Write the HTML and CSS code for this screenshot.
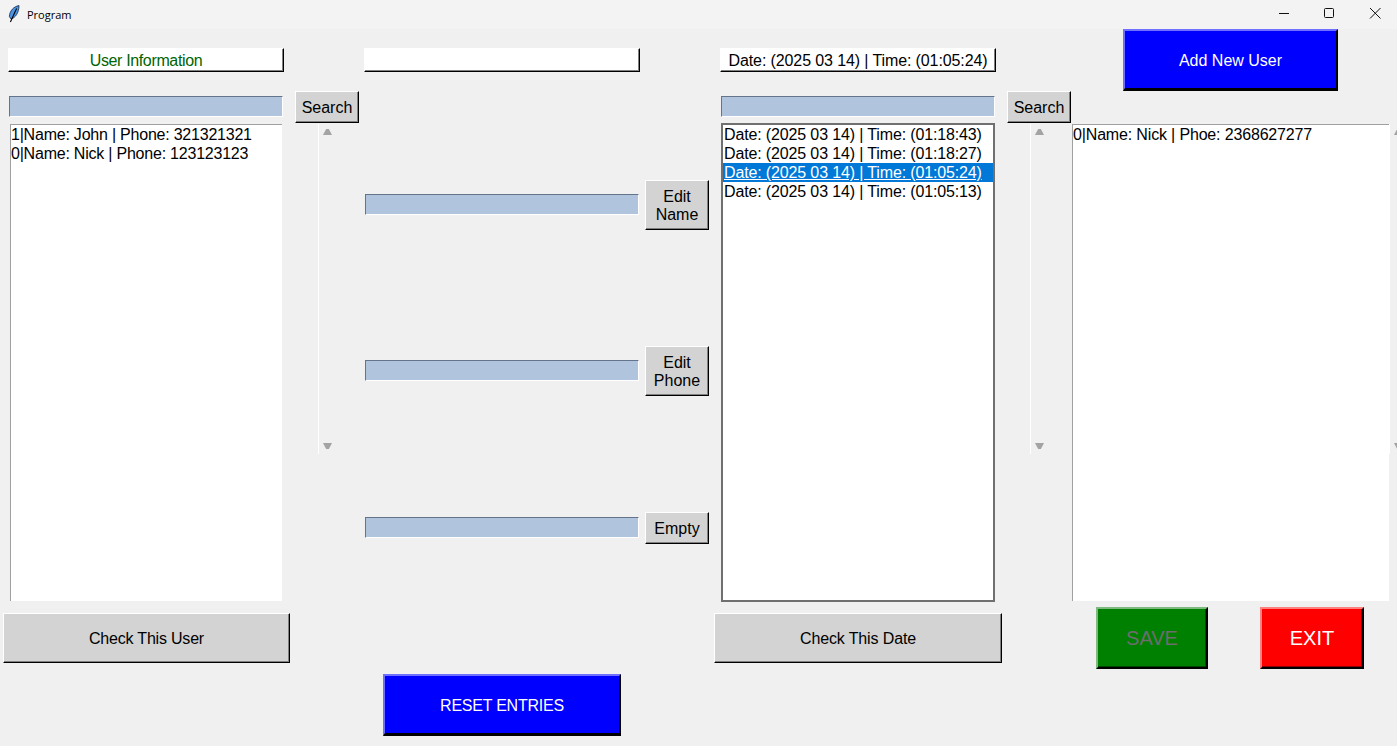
FILE: index.html
```html
<!DOCTYPE html>
<html lang="en">
<head>
    <meta charset="UTF-8">
    <meta name="viewport" content="width=device-width, initial-scale=1.0">
    <title>Program</title>
    <link rel="stylesheet" href="styles.css">
</head>
<body>

    <header class="titlebar">
        <svg class="app-icon" width="12" height="18" viewBox="0 0 12 18">
            <path d="M11 0.6C6 1.4 1.6 5.6 1.4 11.6L3 14C7.4 12.8 10.8 8 11 0.6Z" fill="#4a94e6" stroke="#1c3554" stroke-width="0.9"/>
            <path d="M8.6 3.6L2.4 17" stroke="#000" stroke-width="1.1" fill="none"/>
        </svg>
        <span class="app-name">Program</span>
        <div class="window-controls">
            <svg class="win-btn" width="46" height="29" viewBox="0 0 46 29"><path d="M19 13.5H29" stroke="#111" fill="none"/></svg>
            <svg class="win-btn" width="46" height="29" viewBox="0 0 46 29"><rect x="18.5" y="8.5" width="9" height="9" rx="1" stroke="#111" fill="none"/></svg>
            <svg class="win-btn" width="46" height="29" viewBox="0 0 46 29"><path d="M18 8L28.5 18.5M28.5 8L18 18.5" stroke="#111" fill="none"/></svg>
        </div>
    </header>

    <main class="app">

        <!-- users -->
        <section class="col col-users">
            <div class="heading heading-users">User Information</div>
            <div class="search-row">
                <input class="entry search-entry" type="text">
                <button class="btn btn-small search-btn" type="button">Search</button>
            </div>
            <div class="list-row">
                <ul class="listbox users-list">
                    <li>1|Name: John | Phone: 321321321</li>
                    <li>0|Name: Nick | Phone: 123123123</li>
                </ul>
                <div class="scrollbar users-scroll"><span class="arrow-up"></span><span class="arrow-down"></span></div>
            </div>
            <button class="btn check-user" type="button">Check This User</button>
        </section>

        <!-- edit fields -->
        <section class="col col-edit">
            <div class="heading"></div>
            <div class="edit-row first-edit">
                <input class="entry edit-entry" type="text">
                <button class="btn btn-small edit-btn" type="button">Edit<br>Name</button>
            </div>
            <div class="edit-row">
                <input class="entry edit-entry" type="text">
                <button class="btn btn-small edit-btn" type="button">Edit<br>Phone</button>
            </div>
            <div class="edit-row short-row">
                <input class="entry edit-entry" type="text">
                <button class="btn btn-small edit-btn" type="button">Empty</button>
            </div>
            <button class="btn btn-blue reset-btn" type="button">RESET ENTRIES</button>
        </section>

        <!-- dates -->
        <section class="col col-dates">
            <div class="heading heading-date">Date: (2025 03 14) | Time: (01:05:24)</div>
            <div class="search-row">
                <input class="entry search-entry" type="text">
                <button class="btn btn-small search-btn" type="button">Search</button>
            </div>
            <div class="list-row">
                <ul class="listbox dates-list">
                    <li>Date: (2025 03 14) | Time: (01:18:43)</li>
                    <li>Date: (2025 03 14) | Time: (01:18:27)</li>
                    <li class="selected"><span>Date: (2025 03 14) | Time: (01:05:24)</span></li>
                    <li>Date: (2025 03 14) | Time: (01:05:13)</li>
                </ul>
                <div class="scrollbar dates-scroll"><span class="arrow-up"></span><span class="arrow-down"></span></div>
            </div>
            <button class="btn check-date" type="button">Check This Date</button>
        </section>

        <!-- details -->
        <section class="col col-details">
            <button class="btn btn-blue add-btn" type="button">Add New User</button>
            <div class="list-row details-row">
                <ul class="listbox details-list">
                    <li>0|Name: Nick | Phoe: 2368627277</li>
                </ul>
                <div class="scrollbar details-scroll"><span class="arrow-up"></span><span class="arrow-down"></span></div>
            </div>
            <div class="action-row">
                <button class="btn btn-save" type="button">SAVE</button>
                <button class="btn btn-exit" type="button">EXIT</button>
            </div>
        </section>

    </main>

</body>
</html>
```

FILE: styles.css
```css
* {
    box-sizing: border-box;
}

html, body {
    height: 100%;
}

body {
    margin: 0;
    overflow: hidden;
    background-color: #f0f0f0;
    font-family: "Liberation Sans", Arial, sans-serif;
    font-size: 16px;
    color: #000;
}

/* window title bar */
.titlebar {
    display: flex;
    align-items: center;
    height: 29px;
    padding-left: 8px;
    background-color: #f3f3f3;
}

.app-icon {
    margin-top: -2px;
}

.app-name {
    margin-left: 7px;
    font-family: "Open Sans", sans-serif;
    font-size: 11px;
    color: #000;
}

.window-controls {
    display: flex;
    margin-left: auto;
    margin-right: -1px;
}

.win-btn {
    display: block;
}

/* main layout */
.app {
    display: flex;
    height: 717px;
    padding-left: 3px;
}

.col {
    display: flex;
    flex-direction: column;
    align-items: flex-start;
    flex-shrink: 0;
}

.col-users {
    width: 361px;
}

.col-edit {
    width: 350px;
}

.col-dates {
    width: 358px;
}

.col-details {
    width: 325px;
}

/* heading labels */
.heading {
    width: 276px;
    height: 24px;
    margin-top: 19px;
    border-style: solid;
    border-width: 1px;
    border-color: #fff #000 #000 #fff;
    background-color: #fff;
    box-shadow: inset -1px -1px 0 #808080;
    line-height: 23px;
    text-align: center;
    white-space: nowrap;
}

.heading-users {
    margin-left: 5px;
    color: #006400;
    letter-spacing: -0.36px;
}

.heading-date {
    margin-left: 6px;
    letter-spacing: -0.11px;
}

/* entries */
.entry {
    display: block;
    width: 274px;
    height: 21px;
    padding: 0;
    border-style: solid;
    border-width: 1px;
    border-color: #64748a #fff #fff #64748a;
    border-radius: 0;
    background-color: #b0c4de;
    outline: none;
}

.search-row {
    display: flex;
    align-items: flex-start;
    height: 32px;
    margin-top: 19px;
}

.search-entry {
    margin-top: 5px;
    margin-left: 6px;
}

.col-dates .search-entry {
    margin-left: 7px;
}

.search-btn {
    width: 64px;
    height: 32px;
    margin-left: 12px;
    padding-left: 1px;
}

/* buttons */
.btn {
    display: block;
    padding: 2px 0 0;
    border-style: solid;
    border-width: 1px;
    border-color: #fff #000 #000 #fff;
    border-radius: 0;
    background-color: #d3d3d3;
    box-shadow: inset -1px -1px 0 #808080;
    font-family: "Liberation Sans", Arial, sans-serif;
    font-size: 16px;
    line-height: 18px;
    color: #000;
    cursor: pointer;
}

.check-user {
    width: 287px;
    height: 50px;
    margin-top: 12px;
    letter-spacing: -0.2px;
}

.check-date {
    width: 288px;
    height: 50px;
    margin-top: 11px;
    letter-spacing: -0.13px;
}

.btn-blue {
    border-width: 2px 2px 3px 2px;
    border-color: #7070ff #000 #000 #7070ff;
    background-color: #00f;
    box-shadow: none;
    color: #fff;
}

.add-btn {
    width: 215px;
    height: 62px;
    margin-left: 51px;
}

.reset-btn {
    width: 238px;
    height: 62px;
    margin-top: 130px;
    margin-left: 19px;
    letter-spacing: -0.23px;
}

.btn-save,
.btn-exit {
    height: 62px;
    padding: 0;
    border-width: 2px;
    box-shadow: inset -1px -1px 0 rgba(0, 0, 0, 0.45);
    font-size: 20px;
}

.btn-save {
    width: 112px;
    margin-left: 24px;
    border-color: #80b980 #000 #000 #80b980;
    background-color: #008000;
    color: #6d6d6d;
}

.btn-exit {
    width: 104px;
    margin-left: 52px;
    border-color: #ff8080 #000 #000 #ff8080;
    background-color: #f00;
    color: #fff;
}

.action-row {
    display: flex;
    margin-top: 6px;
}

/* edit column */
.edit-row {
    display: flex;
    align-items: flex-start;
    margin-top: 116px;
}

.first-edit {
    margin-top: 108px;
}

.edit-entry {
    margin-top: 14px;
    margin-left: 1px;
}

.edit-btn {
    width: 64px;
    height: 50px;
    margin-left: 6px;
}

.short-row .edit-entry {
    margin-top: 5px;
}

.short-row .edit-btn {
    height: 32px;
}

/* listboxes */
.list-row {
    display: flex;
    align-items: flex-start;
    margin-top: 1px;
}

.listbox {
    margin: 0;
    padding: 0;
    border-style: solid;
    border-width: 1px 0 0 1px;
    border-color: #a0a0a0;
    background-color: #fff;
    list-style: none;
    flex-shrink: 0;
}

.listbox li {
    height: 19px;
    line-height: 19px;
    white-space: nowrap;
}

.users-list {
    width: 272px;
    height: 477px;
    margin-left: 7px;
    letter-spacing: -0.22px;
}

.dates-list {
    width: 274px;
    height: 479px;
    margin-left: 7px;
    border: 2px solid #707070;
    letter-spacing: -0.14px;
}

.dates-list li {
    padding-left: 1px;
}

.dates-list .selected {
    background-color: #0078d7;
    color: #fff;
}

.selected span {
    text-decoration: underline;
}

.details-list {
    width: 317px;
    height: 477px;
    letter-spacing: -0.16px;
}

.col-dates .list-row {
    margin-top: 0;
}

.details-row {
    margin-top: 33px;
}

/* scrollbars, only the line and the two arrows are visible */
.scrollbar {
    display: flex;
    flex-direction: column;
    justify-content: space-between;
    flex-shrink: 0;
    width: 18px;
    height: 330px;
    padding: 5px 0 5px 4px;
    border-left: 1px solid #fff;
}

.users-scroll {
    margin-left: 36px;
}

.dates-scroll {
    margin-top: 1px;
    margin-left: 35px;
}

.arrow-up,
.arrow-down {
    display: block;
    width: 9px;
    height: 6px;
    background-color: #a3a3a3;
}

.arrow-up {
    clip-path: polygon(35% 0, 65% 0, 100% 100%, 0 100%);
}

.arrow-down {
    clip-path: polygon(0 0, 100% 0, 65% 100%, 35% 100%);
}
```
